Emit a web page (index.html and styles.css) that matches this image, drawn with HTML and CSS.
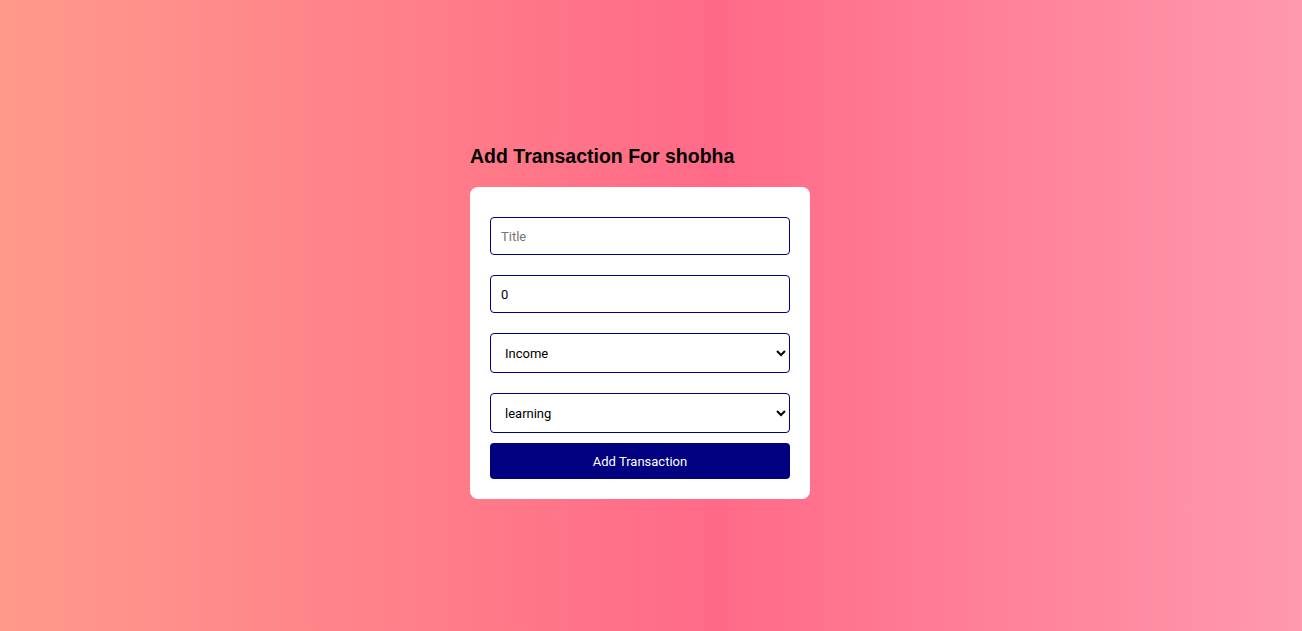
FILE: index.html
```html
<!DOCTYPE html>
<html lang="en">
<head>
<meta charset="utf-8">
<title>Add Transaction</title>
<link rel="stylesheet" href="styles.css">
</head>
<body>
<main class="page">
  <section class="panel">
    <h2 class="panel-title">Add Transaction For shobha</h2>
    <form class="card">
      <input class="field" type="text" placeholder="Title">
      <input class="field" type="number" value="0">
      <select class="field field-select">
        <option>Income</option>
        <option>Expense</option>
      </select>
      <select class="field field-select field-last">
        <option>learning</option>
      </select>
      <button class="submit" type="button">Add Transaction</button>
    </form>
  </section>
</main>
</body>
</html>
```

FILE: styles.css
```css
html, body {
  margin: 0;
  padding: 0;
  height: 100%;
}

body {
  background: linear-gradient(90deg, #ff9a8b 0%, #ff6a88 55%, #ff99ac 100%);
  font-family: "Liberation Sans", Arial, sans-serif;
}

.page {
  min-height: 100%;
  display: flex;
  justify-content: center;
  padding-top: 143px;
  padding-right: 22px;
  box-sizing: border-box;
}

.panel {
  width: 340px;
}

.panel-title {
  margin: 0 0 18px;
  font-size: 19.5px;
  line-height: 26px;
  font-weight: bold;
  color: #000;
}

.card {
  background: #fff;
  border-radius: 8px;
  padding: 30px 20px 20px;
  display: flex;
  flex-direction: column;
  gap: 20px;
}

.field {
  box-sizing: border-box;
  width: 100%;
  height: 38px;
  border: 1px solid #000080;
  border-radius: 4px;
  padding: 0 10px;
  font-family: Roboto, sans-serif;
  font-size: 13px;
  color: #000;
  background: #fff;
  outline: none;
}

.field::placeholder {
  color: #757575;
}

.field-select {
  height: 40px;
}

.field-last {
  margin-bottom: -10px;
}

.submit {
  height: 36px;
  border: none;
  border-radius: 4px;
  background: #000080;
  color: #fff;
  font-family: Roboto, sans-serif;
  font-size: 13px;
  cursor: pointer;
}
```
